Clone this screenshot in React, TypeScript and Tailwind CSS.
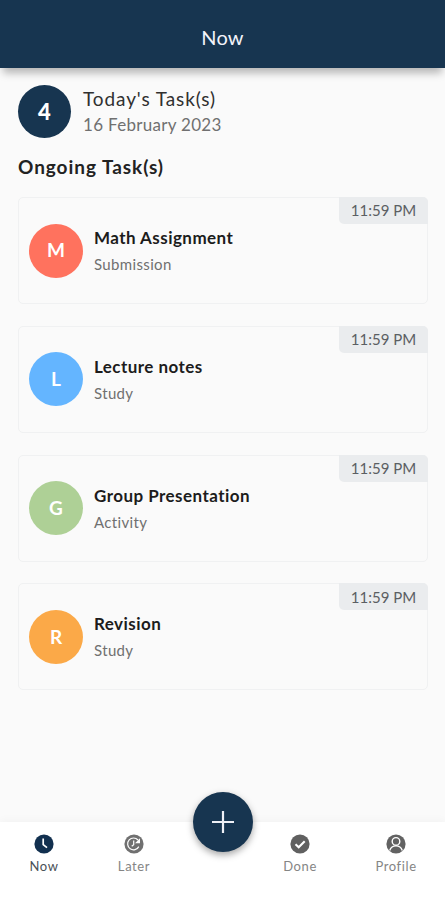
import React from 'react';

interface Task {
  title: string;
  type: string;
  time: string;
  color: string;
}

const TASKS: Task[] = [
  { title: 'Math Assignment', type: 'Submission', time: '11:59 PM', color: 'bg-[#ff725e]' },
  { title: 'Lecture notes', type: 'Study', time: '11:59 PM', color: 'bg-[#64b5ff]' },
  { title: 'Group Presentation', type: 'Activity', time: '11:59 PM', color: 'bg-[#aed096]' },
  { title: 'Revision', type: 'Study', time: '11:59 PM', color: 'bg-[#fba948]' },
];

const TaskCard: React.FC<{ task: Task }> = ({ task }) => (
  <div className="relative flex h-[107px] items-center rounded-[5px] border border-[#f0f1f2] pl-[10px]">
    <div className={`flex h-[54px] w-[54px] items-center justify-center rounded-full text-[19px] font-bold text-white ${task.color}`}>
      {task.title[0]}
    </div>
    <div className="ml-[11px] flex flex-col pt-[2px]">
      <p className="text-[17px] leading-[26px] font-bold tracking-[0.45px] text-[#1c1c1c]">{task.title}</p>
      <p className="text-[15px] leading-[27px] tracking-[0.35px] text-[#707070]">{task.type}</p>
    </div>
    <span className="absolute -top-px -right-px flex h-[27px] w-[89px] items-center justify-center rounded-tr-[5px] rounded-bl-[5px] bg-[#eaecee] text-[15px] text-[#5b5f63]">
      {task.time}
    </span>
  </div>
);

const NowIcon = () => (
  <svg width="20" height="20" viewBox="0 0 20 20" fill="none">
    <circle cx="10" cy="10" r="9.6" fill="#12304f" />
    <path d="M9.2 4.6v6l3.8 3.1" stroke="#fff" strokeWidth="1.7" />
  </svg>
);

const LaterIcon = () => (
  <svg width="20" height="20" viewBox="0 0 20 20" fill="none">
    <circle cx="10" cy="10" r="9.6" fill="#707070" />
    <path d="M14.8 12.6A5.9 5.9 0 1 1 14 6" stroke="#fff" strokeWidth="1.2" />
    <path d="M16 4.2v5h-5z" fill="#fff" />
    <path d="M9.7 6.5v4.1l-2 1.7" stroke="#fff" strokeWidth="1.2" />
  </svg>
);

const DoneIcon = () => (
  <svg width="20" height="20" viewBox="0 0 20 20" fill="none">
    <circle cx="10" cy="10" r="9.6" fill="#606060" />
    <path d="m5.5 10.3 3.2 3 6-6" stroke="#fff" strokeWidth="2.1" />
  </svg>
);

const ProfileIcon = () => (
  <svg width="20" height="20" viewBox="0 0 20 20" fill="none">
    <circle cx="10" cy="10" r="9.6" fill="#626262" />
    <circle cx="10" cy="7.4" r="3.8" stroke="#fff" strokeWidth="1.4" />
    <path d="M3.7 16.4c1.1-3 3.3-4.5 6.3-4.5s5.2 1.5 6.3 4.5" stroke="#fff" strokeWidth="1.4" />
  </svg>
);

const NavItem: React.FC<{ label: string; active?: boolean; children: React.ReactNode }> = ({ label, active, children }) => (
  <div className="flex w-[60px] flex-col items-center">
    {children}
    <span className={`mt-[3px] text-[13px] leading-[18px] tracking-[0.6px] ${active ? 'text-[#4a5158]' : 'text-[#858585]'}`}>{label}</span>
  </div>
);

export default function App() {
  return (
    <div className="flex h-[900px] w-[445px] flex-col overflow-hidden bg-[#fafafa] font-['Lato',sans-serif]">
      {/* Header */}
      <header className="flex h-[68px] shrink-0 items-center justify-center bg-[#173550] pt-[6px] shadow-[0_8px_8px_-3px_rgba(0,0,0,0.28)]">
        <h1 className="text-[20px] tracking-[0.2px] text-[#f2f3fa]">Now</h1>
      </header>

      <main className="flex flex-1 flex-col pt-[17px] pr-[17px] pl-[18px]">
        {/* Summary of the day */}
        <div className="flex h-[53px] items-center">
          <div className="flex h-[53px] w-[53px] items-center justify-center rounded-full bg-[#173550] text-[22px] font-black text-white">4</div>
          <div className="ml-[12px]">
            <p className="text-[19px] leading-[26px] tracking-[0.9px] text-[#303030]">Today's Task(s)</p>
            <p className="text-[17px] leading-[26px] tracking-[0.3px] text-[#707070]">16 February 2023</p>
          </div>
        </div>

        <h2 className="mt-[15px] text-[19px] leading-[28px] font-bold tracking-[0.95px] text-[#222]">Ongoing Task(s)</h2>

        <div className="mt-[16px] flex flex-col gap-[21.8px]">
          {TASKS.map(task => <TaskCard key={task.title} task={task} />)}
        </div>
      </main>

      {/* Bottom navigation */}
      <nav className="relative flex h-[78px] shrink-0 bg-white pt-[12px] pl-[14px] shadow-[0_-2px_8px_rgba(0,0,0,0.03)]">
        <NavItem label="Now" active><NowIcon /></NavItem>
        <div className="ml-[30px]"><NavItem label="Later"><LaterIcon /></NavItem></div>
        <div className="ml-[106px]"><NavItem label="Done"><DoneIcon /></NavItem></div>
        <div className="ml-[36px]"><NavItem label="Profile"><ProfileIcon /></NavItem></div>

        <button aria-label="Add task" className="absolute -top-[30px] left-[193px] flex h-[60px] w-[60px] items-center justify-center rounded-full bg-[#173550] shadow-[0_3px_7px_rgba(0,0,0,0.35)]">
          <svg width="24" height="24" viewBox="0 0 24 24" stroke="#eef0f6" strokeWidth="2.2">
            <path d="M12 1v22M1 12h22" />
          </svg>
        </button>
      </nav>
    </div>
  );
}
